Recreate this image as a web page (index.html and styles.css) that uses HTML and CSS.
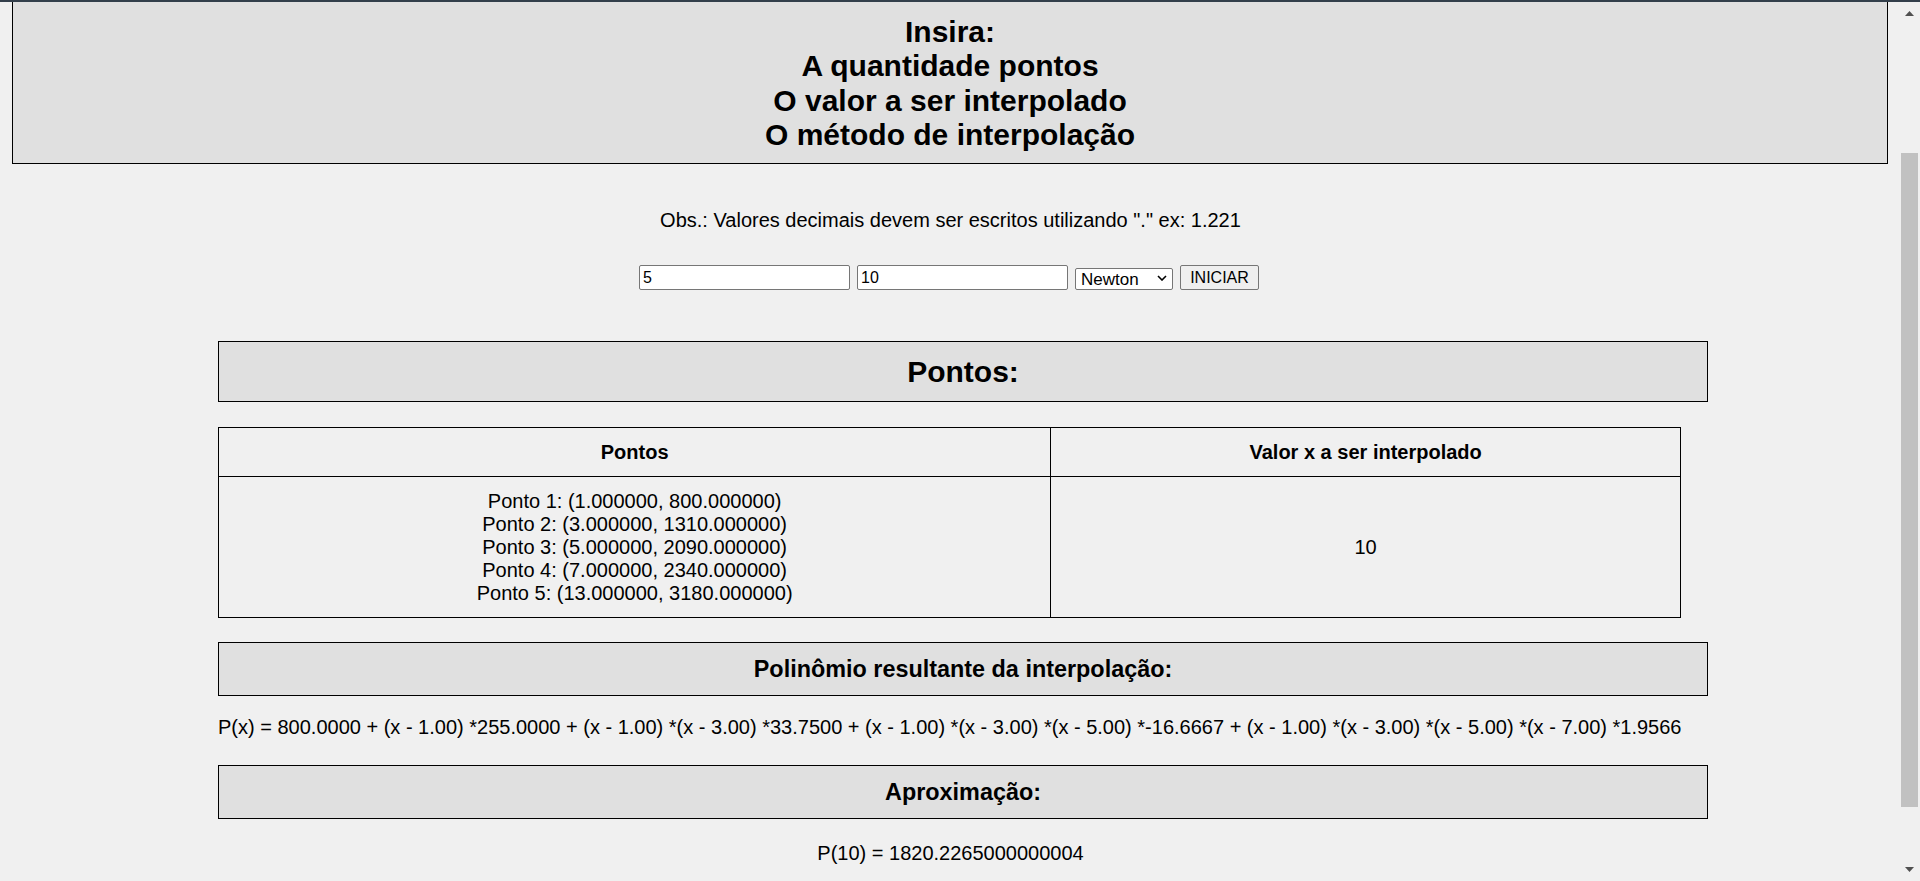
FILE: index.html
```html
<!DOCTYPE html>
<html lang="pt-BR">
<head>
<meta charset="utf-8">
<title>Interpolação</title>
<link rel="stylesheet" href="styles.css">
</head>
<body>
<div class="topbar"></div>
<div class="window">
  <main class="page">
    <header class="intro">Insira:<br>A quantidade pontos<br>O valor a ser interpolado<br>O método de interpolação</header>
    <p class="obs">Obs.: Valores decimais devem ser escritos utilizando "." ex: 1.221</p>
    <form class="controls">
      <input class="field" type="text" value="5">
      <input class="field" type="text" value="10">
      <span class="select-wrap">
        <select class="method"><option>Newton</option></select>
        <svg class="chev" width="10" height="6" viewBox="0 0 10 6"><path d="M1 1 L5 5 L9 1" fill="none" stroke="#000" stroke-width="1.6"/></svg>
      </span>
      <button class="start" type="button">INICIAR</button>
    </form>
    <h2 class="panel panel-lg boxed">Pontos:</h2>
    <table class="points boxed">
      <thead>
        <tr><th class="col-a">Pontos</th><th class="col-b">Valor x a ser interpolado</th></tr>
      </thead>
      <tbody>
        <tr>
          <td>Ponto 1: (1.000000, 800.000000)<br>Ponto 2: (3.000000, 1310.000000)<br>Ponto 3: (5.000000, 2090.000000)<br>Ponto 4: (7.000000, 2340.000000)<br>Ponto 5: (13.000000, 3180.000000)</td>
          <td>10</td>
        </tr>
      </tbody>
    </table>
    <h3 class="panel panel-sm boxed gap-poly">Polinômio resultante da interpolação:</h3>
    <p class="poly boxed">P(x) = 800.0000 + (x - 1.00) *255.0000 + (x - 1.00) *(x - 3.00) *33.7500 + (x - 1.00) *(x - 3.00) *(x - 5.00) *-16.6667 + (x - 1.00) *(x - 3.00) *(x - 5.00) *(x - 7.00) *1.9566</p>
    <h3 class="panel panel-sm boxed gap-approx">Aproximação:</h3>
    <p class="approx">P(10) = 1820.2265000000004</p>
  </main>
  <div class="scrollbar">
    <svg class="arrow arrow-up" width="9" height="5" viewBox="0 0 9 5"><path d="M4.5 0 L9 5 L0 5 Z" fill="#505050"/></svg>
    <div class="thumb"></div>
    <svg class="arrow arrow-down" width="9" height="5" viewBox="0 0 9 5"><path d="M0 0 L9 0 L4.5 5 Z" fill="#505050"/></svg>
  </div>
</div>
</body>
</html>
```
FILE: styles.css
```css
html, body {
  margin: 0;
  padding: 0;
  height: 881px;
  overflow: hidden;
  background: #f0f0f0;
  font-family: "Liberation Sans", Arial, sans-serif;
  font-size: 20px;
  color: #000;
}

.topbar {
  height: 2px;
  background: #333f4b;
}

.window {
  display: flex;
  height: 879px;
}

.page {
  width: 1901px;
  flex: none;
  text-align: center;
}

.intro {
  margin: 0 13px 0 12px;
  padding: 12.5px 0 10.5px;
  background: #e0e0e0;
  border: 1px solid #000;
  border-top: none;
  font-size: 30px;
  font-weight: bold;
  line-height: 34.5px;
}

.obs {
  margin: 45px 0 0;
  line-height: 23px;
}

.controls {
  margin: 33px 0 0;
  display: flex;
  justify-content: center;
  align-items: center;
  gap: 7px;
  padding-right: 3px;
  height: 25px;
}

.field {
  box-sizing: border-box;
  width: 211px;
  height: 25px;
  margin: 0;
  padding: 1px 3px;
  border: 1px solid #767676;
  border-radius: 2px;
  background: #fff;
  font-family: "Liberation Sans", Arial, sans-serif;
  font-size: 16px;
  color: #000;
}

.select-wrap {
  position: relative;
  display: block;
  width: 98px;
  height: 22px;
}

.method {
  appearance: none;
  -webkit-appearance: none;
  box-sizing: border-box;
  width: 98px;
  height: 22px;
  margin: 0;
  padding: 0 0 0 5px;
  border: 1px solid #767676;
  border-radius: 2px;
  background: #fff;
  font-family: "Liberation Sans", Arial, sans-serif;
  font-size: 17px;
  color: #000;
}

.chev {
  position: absolute;
  right: 6px;
  top: 8px;
  pointer-events: none;
}

.start {
  box-sizing: border-box;
  width: 79px;
  height: 25px;
  margin: 0;
  padding: 0;
  border: 1px solid #767676;
  border-radius: 2px;
  background: #efefef;
  font-family: "Liberation Sans", Arial, sans-serif;
  font-size: 16px;
  color: #000;
}

.boxed {
  margin-left: 218px;
}

.panel {
  box-sizing: border-box;
  width: 1490px;
  margin-bottom: 0;
  margin-right: 0;
  background: #e0e0e0;
  border: 1px solid #000;
  font-weight: bold;
  display: flex;
  align-items: center;
  justify-content: center;
}

.panel-lg {
  margin-top: 51px;
  height: 61px;
  font-size: 30px;
}

.panel-sm {
  height: 54px;
  font-size: 23.4px;
  line-height: 27px;
}

.points {
  margin-top: 25px;
  width: 1463px;
  border-collapse: collapse;
  font-size: 20px;
  line-height: 23px;
}

.points th,
.points td {
  border: 1px solid #000;
  padding: 12.5px 0;
  text-align: center;
  vertical-align: middle;
}

.points th {
  font-weight: bold;
}

.col-a { width: 833px; }
.col-b { width: 630px; }

.gap-poly { margin-top: 24px; }

.poly {
  margin-top: 20px;
  margin-bottom: 0;
  text-align: left;
  line-height: 23px;
  white-space: nowrap;
}

.gap-approx { margin-top: 26px; }

.approx {
  margin: 23px 0 0;
  line-height: 23px;
}

.scrollbar {
  width: 19px;
  flex: none;
  display: flex;
  flex-direction: column;
  background: #f0f0f0;
}

.arrow {
  display: block;
  margin-left: 4px;
}

.arrow-up { margin-top: 9px; }

.thumb {
  margin-top: 137px;
  width: 17px;
  height: 654px;
  background: #c1c1c1;
}

.arrow-down { margin-top: 60px; }
```
